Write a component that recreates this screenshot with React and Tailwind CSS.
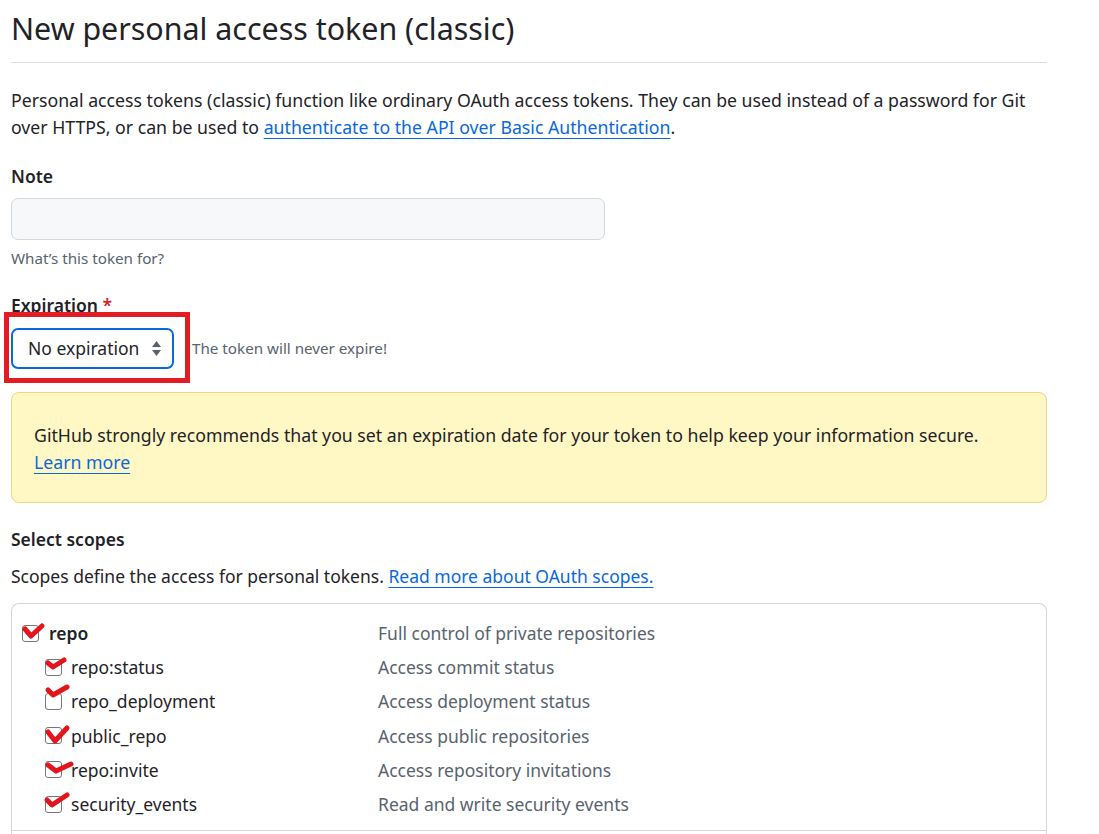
import React from "react";

const FONT = { fontFamily: '"Noto Sans", "Liberation Sans", sans-serif' };

const scopes = [
  { name: "repo", desc: "Full control of private repositories", top: true, tick: "M3 5 L9 12 L20 2" },
  { name: "repo:status", desc: "Access commit status", tick: "M3 5 L8 9 L19 2" },
  { name: "repo_deployment", desc: "Access deployment status", tick: "M3 -2 L8 3 L22 -5" },
  { name: "public_repo", desc: "Access public repositories", tick: "M3 5 L10 14 L22 1" },
  { name: "repo:invite", desc: "Access repository invitations", tick: "M3 4 L11 10 L26 3" },
  { name: "security_events", desc: "Read and write security events", tick: "M2 5 L7 10 L22 0" },
];

// checkbox with the hand-drawn red tick laid over it
function Check({ tick }) {
  return (
    <span className="relative inline-block w-[17px] h-[17px] shrink-0 rounded-[3px] border-[1.5px] border-[#777] bg-white">
      <svg className="absolute -left-[1.5px] -top-[1.5px] w-[17px] h-[17px] overflow-visible" viewBox="0 0 17 17" fill="none">
        <path d={tick} stroke="#e3141b" strokeWidth="5" strokeLinecap="round" strokeLinejoin="round" />
      </svg>
    </span>
  );
}

function SortArrows() {
  return (
    <svg width="11" height="17" viewBox="0 0 11 17" className="shrink-0">
      <path d="M5.5 1 L10 7 H1 Z" fill="#59636e" />
      <path d="M5.5 16 L10 10 H1 Z" fill="#59636e" />
    </svg>
  );
}

export default function App() {
  return (
    <div className="min-h-screen bg-white text-[#1f2328]" style={FONT}>
      <div className="ml-[11px] w-[1036px]">
        <h1 className="text-[30.4px] leading-[44px] pt-[7px] pb-[11px] border-b border-[#d8dee4] font-normal">
          New personal access token (classic)
        </h1>

        <div className="mt-[24px] text-[17.7px] leading-[27px]">
          <div>Personal access tokens (classic) function like ordinary OAuth access tokens. They can be used instead of a password for Git</div>
          <div>
            <span>over HTTPS, or can be used to </span>
            <a className="text-[#0969da] underline underline-offset-[4px]">authenticate to the API over Basic Authentication</a>
            <span>.</span>
          </div>
        </div>

        <div className="mt-[22px] text-[17.5px] leading-[27px] font-semibold">Note</div>
        <div className="mt-[8px] w-[594px] h-[42px] rounded-[7px] border border-[#d1d9e0] bg-[#f6f8fa]" />
        <div className="mt-[8px] text-[15.2px] leading-[20px] text-[#59636e]">What’s this token for?</div>

        <div className="mt-[24px] text-[17.5px] leading-[27px] font-semibold">
          Expiration <span className="text-[#d1242f]">*</span>
        </div>
        <div className="mt-[9px] flex items-center">
          <div className="relative">
            <div className="w-[163px] h-[41px] rounded-[7px] border-2 border-[#0969da] bg-white flex items-center justify-between pl-[15px] pr-[10px] text-[17.5px]">
              <span>No expiration</span>
              <SortArrows />
            </div>
            <div className="absolute -left-[7px] -top-[16px] w-[186px] h-[71px] border-[5px] border-[#e31b23]" />
          </div>
          <span className="ml-[18px] text-[15.2px] text-[#59636e]">The token will never expire!</span>
        </div>

        <div className="mt-[23px] h-[111px] rounded-[8px] border border-[#ecd585] bg-[#fff8c5] pl-[22px] pt-[29px] text-[17.7px] leading-[27px]">
          <div>GitHub strongly recommends that you set an expiration date for your token to help keep your information secure.</div>
          <a className="text-[#0969da] underline underline-offset-[4px]">Learn more</a>
        </div>

        <div className="mt-[23px] text-[17.5px] leading-[27px] font-semibold">Select scopes</div>
        <div className="mt-[10px] text-[17.5px] leading-[27px]">
          <span>Scopes define the access for personal tokens. </span>
          <a className="text-[#0969da] underline underline-offset-[4px]">Read more about OAuth scopes.</a>
        </div>

        <div className="mt-[13px] rounded-t-[8px] border border-b-0 border-[#d1d9e0] pt-[12px]">
          {scopes.map((s) => (
            <div key={s.name} className="flex items-center h-[34.2px] text-[17.5px]">
              <div className={`flex items-center ${s.top ? "pl-[10px]" : "pl-[33px]"} w-[366px]`}>
                <Check tick={s.tick} />
                <span className={s.top ? "ml-[10px] font-semibold" : "ml-[9px]"}>{s.name}</span>
              </div>
              <span className="text-[#59636e]">{s.desc}</span>
            </div>
          ))}
          <div className="mt-[9px] border-t border-[#d1d9e0] h-[40px]" />
        </div>
      </div>
    </div>
  );
}
